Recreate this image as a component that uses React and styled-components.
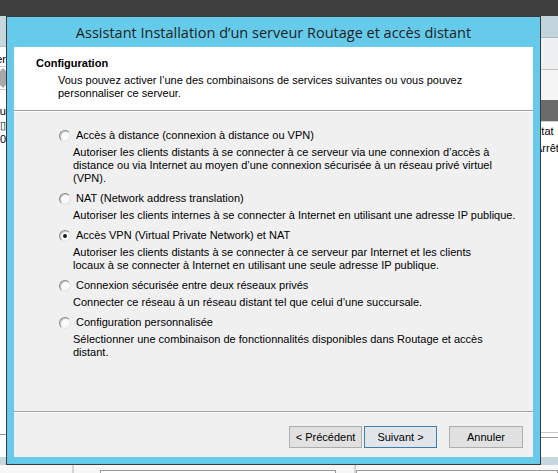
import React from "react";
import styled, { createGlobalStyle } from "styled-components";

const GlobalStyle = createGlobalStyle`
  html, body {
    margin: 0;
    padding: 0;
  }
  body {
    background: #ffffff;
    font-family: "Liberation Sans", Arial, sans-serif;
  }
`;

const Screen = styled.div`
  width: 558px;
  height: 473px;
  overflow: hidden;
  display: flex;
  flex-direction: column;
  background: #f5f5f5;
`;

const TopBar = styled.div`
  height: 16px;
  flex: none;
  background: #3f3f3f;
`;

const Desk = styled.div`
  display: flex;
  height: 449px;
  flex: none;
`;

const Strip = styled.div`
  width: ${(p) => p.$w}px;
  flex: none;
  display: flex;
  flex-direction: column;
  overflow: hidden;
  background: #ffffff;
`;

const Band = styled.div`
  height: ${(p) => p.$h}px;
  flex: ${(p) => (p.$grow ? "1" : "none")};
  background: ${(p) => p.$bg || "#ffffff"};
  border-bottom: ${(p) => (p.$line ? `1px solid ${p.$line}` : "none")};
  display: flex;
  align-items: center;
  justify-content: ${(p) => (p.$end ? "flex-end" : "flex-start")};
  font-size: 11px;
  color: #000;
  white-space: nowrap;
`;

const Shifted = styled.span`
  margin-left: ${(p) => p.$shift}px;
  flex: none;
`;

const Arrow = styled.span`
  width: 14px;
  height: 14px;
  flex: none;
  margin-right: -4px;
  background: #a8a8a8;
  transform: rotate(45deg);
`;

const Dialog = styled.div`
  width: 535px;
  flex: none;
  box-sizing: border-box;
  border: 1px solid #3a3a3a;
  background: #66cbea;
  padding: 0 7px 7px;
  display: flex;
  flex-direction: column;
`;

const TitleBar = styled.div`
  height: 30px;
  flex: none;
  display: flex;
  align-items: center;
  justify-content: center;
  font-family: "Open Sans", "Noto Sans", sans-serif;
  font-size: 14.5px;
  color: #1e1e1e;
  white-space: nowrap;
`;

const Client = styled.div`
  flex: 1;
  display: flex;
  flex-direction: column;
  background: #f0f0f0;
  font-size: 11px;
  line-height: 13px;
  color: #000;
`;

const Header = styled.div`
  flex: none;
  height: 53px;
  background: #ffffff;
  border-bottom: 1px solid #a0a0a0;
  box-shadow: 0 1px 0 #ffffff;
  padding: 10px 0 0 22px;
`;

const Heading = styled.div`
  font-weight: bold;
`;

const Subtitle = styled.div`
  margin: 4px 0 0 22px;
`;

const Body = styled.div`
  flex: 1;
  margin-top: 1px;
  padding: 17px 0 0 45px;
  display: flex;
  flex-direction: column;
  gap: 7px;
`;

const Option = styled.div`
  display: flex;
  flex-direction: column;
  gap: 4px;
`;

const RadioRow = styled.label`
  display: flex;
  align-items: center;
  gap: 5px;
  height: 13px;
  white-space: nowrap;
`;

const RadioMark = styled.span`
  width: 12px;
  height: 12px;
  flex: none;
  box-sizing: border-box;
  border-radius: 50%;
  border: 1px solid;
  border-color: #8a8a8a #e4e4e4 #e4e4e4 #8a8a8a;
  background: radial-gradient(circle at 45% 45%, #ffffff 0%, #f6f6f6 60%, #e6e6e6 100%);
  box-shadow: inset 1px 1px 0 #c8c8c8;
  display: flex;
  align-items: center;
  justify-content: center;

  &::after {
    content: "";
    width: 4px;
    height: 4px;
    border-radius: 50%;
    background: ${(p) => (p.$on ? "#1a1a1a" : "transparent")};
  }
`;

const Desc = styled.div`
  margin-left: 14px;
  white-space: nowrap;
`;

const Footer = styled.div`
  height: 46px;
  flex: none;
  border-top: 1px solid #a0a0a0;
  box-shadow: inset 0 1px 0 #ffffff;
  display: flex;
  justify-content: flex-end;
  align-items: flex-start;
  padding: 14px 10px 0 0;
  box-sizing: border-box;
`;

const Button = styled.button`
  width: ${(p) => p.$w}px;
  height: 22px;
  margin-left: ${(p) => p.$gap}px;
  box-sizing: border-box;
  border: 1px solid ${(p) => (p.$primary ? "#3c7fb1" : "#adadad")};
  background: ${(p) => (p.$primary ? "#e1e5ea" : "#e1e1e1")};
  font-family: "Liberation Sans", Arial, sans-serif;
  font-size: 11px;
  color: #000;
  padding: 0;
`;

const BottomRow = styled.div`
  height: 8px;
  flex: none;
  display: flex;
  background: #f7f7f7;
`;

const Cell = styled.div`
  width: ${(p) => p.$w}px;
  flex: ${(p) => (p.$grow ? "1" : "none")};
  border-right: ${(p) => (p.$divider ? "2px solid #d4d4d4" : "none")};
`;

const Box = styled.div`
  width: ${(p) => p.$w}px;
  flex: ${(p) => (p.$grow ? "1" : "none")};
  margin-top: 5px;
  border-top: 1px solid #9a9a9a;
  border-left: 1px solid #9a9a9a;
  border-right: 1px solid #9a9a9a;
  background: #ffffff;
`;

const options = [
  {
    label: "Accès à distance (connexion à distance ou VPN)",
    lines: [
      "Autoriser les clients distants à se connecter à ce serveur via une connexion d’accès à",
      "distance ou via Internet au moyen d’une connexion sécurisée à un réseau privé virtuel",
      "(VPN).",
    ],
  },
  {
    label: "NAT (Network address translation)",
    lines: ["Autoriser les clients internes à se connecter à Internet en utilisant une adresse IP publique."],
  },
  {
    label: "Accès VPN (Virtual Private Network) et NAT",
    checked: true,
    lines: [
      "Autoriser les clients distants à se connecter à ce serveur par Internet et les clients",
      "locaux à se connecter à Internet en utilisant une seule adresse IP publique.",
    ],
  },
  {
    label: "Connexion sécurisée entre deux réseaux privés",
    lines: ["Connecter ce réseau à un réseau distant tel que celui d’une succursale."],
  },
  {
    label: "Configuration personnalisée",
    lines: [
      "Sélectionner une combinaison de fonctionnalités disponibles dans Routage et accès",
      "distant.",
    ],
  },
];

export default function App() {
  return (
    <>
      <GlobalStyle />
      <Screen>
        <TopBar />
        <Desk>
          <Strip $w={6}>
            <Band $h={30} $bg="#c6d7dd" $line="#b0c0c6" />
            <Band $h={5} />
            <Band $h={14} $end $line="#c8c8c8">
              er
            </Band>
            <Band $h={22} $end $line="#c8c8c8">
              <Arrow />
            </Band>
            <Band $h={14} />
            <Band $h={14} $end>
              ou
            </Band>
            <Band $h={14} $end>
              ▯
            </Band>
            <Band $h={14} $end>
              0
            </Band>
            <Band $grow $line="#9a9a9a" />
            <Band $h={22} />
            <Band $h={8} $bg="#c6d7dd" />
          </Strip>

          <Dialog>
            <TitleBar>Assistant Installation d’un serveur Routage et accès distant</TitleBar>
            <Client>
              <Header>
                <Heading>Configuration</Heading>
                <Subtitle>
                  Vous pouvez activer l’une des combinaisons de services suivantes ou vous pouvez
                  <br />
                  personnaliser ce serveur.
                </Subtitle>
              </Header>
              <Body>
                {options.map((o) => (
                  <Option key={o.label}>
                    <RadioRow>
                      <RadioMark $on={o.checked} />
                      {o.label}
                    </RadioRow>
                    <Desc>
                      {o.lines.map((l, i) => (
                        <div key={i}>{l}</div>
                      ))}
                    </Desc>
                  </Option>
                ))}
              </Body>
              <Footer>
                <Button $w={73} $gap={0}>
                  &lt; Précédent
                </Button>
                <Button $w={73} $gap={2} $primary>
                  Suivant &gt;
                </Button>
                <Button $w={74} $gap={12}>
                  Annuler
                </Button>
              </Footer>
            </Client>
          </Dialog>

          <Strip $w={17}>
            <Band $h={21} $bg="#c3d5dc" $line="#a8b8be" />
            <Band $h={31} $bg="#eef0f1" $line="#c4c4c4" />
            <Band $h={30} $bg="#f5f5f5" />
            <Band $h={21} $bg="#6b6b6b" $line="#d0d0d0" />
            <Band $h={17}>
              <Shifted $shift={-7}>État</Shifted>
            </Band>
            <Band $h={17}>
              <Shifted $shift={-6}>Arrêté</Shifted>
            </Band>
            <Band $grow $line="#c8c8c8" />
            <Band $h={4} $line="#9a9a9a" />
            <Band $h={19} />
            <Band $h={8} $bg="#c6d7dd" />
          </Strip>
        </Desk>
        <BottomRow>
          <Cell $w={72} $divider />
          <Cell $w={26} />
          <Box $w={234} />
          <Cell $w={18} $divider />
          <Box $grow />
        </BottomRow>
      </Screen>
    </>
  );
}
